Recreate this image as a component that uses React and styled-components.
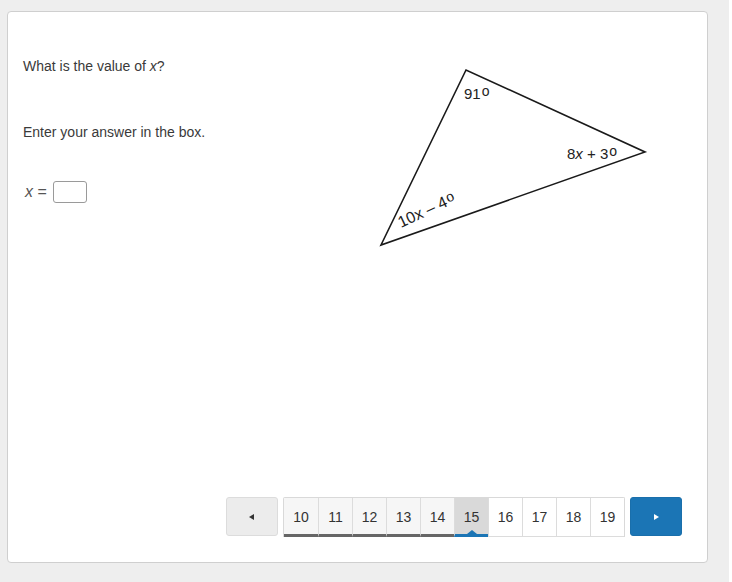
import React from "react";
import styled, { createGlobalStyle } from "styled-components";

const Global = createGlobalStyle`
  html, body { margin: 0; padding: 0; background: #ffffff; }
  body { font-family: "Liberation Sans", Arial, sans-serif; color: #333; }
`;

const Page = styled.div`
  width: 729px;
  height: 582px;
  background: #eeeeee;
  padding: 11px 0 0 7px;
  box-sizing: border-box;
`;

const Card = styled.div`
  width: 701px;
  height: 552px;
  box-sizing: border-box;
  background: #fff;
  border: 1px solid #cfcfcf;
  border-radius: 4px;
  display: flex;
  flex-direction: column;
  padding: 46px 25px 25px 15px;
`;

const Body = styled.div`
  display: flex;
  flex: 1;
`;

const Question = styled.div`
  width: 355px;
  font-size: 14px;
  line-height: 16px;
  color: #3a3a3a;
`;

const Para = styled.p`
  margin: 0 0 ${(p) => p.$gap || 0}px 0;
`;

const Answer = styled.div`
  display: flex;
  align-items: center;
  gap: 6px;
  color: #555;
  font-size: 16px;
  padding-left: 2px;
`;

const Var = styled.i`
  font-style: italic;
`;

const Box = styled.span`
  display: inline-block;
  width: 32px;
  height: 20px;
  border: 1px solid #9a9a9a;
  border-radius: 3px;
  background: #fff;
`;

const Figure = styled.svg`
  display: block;
  margin-top: 8px;
`;

const Pager = styled.div`
  display: flex;
  justify-content: flex-end;
  align-items: flex-start;
`;

const NavButton = styled.button`
  width: 52px;
  height: 39px;
  box-sizing: border-box;
  border-radius: 3px;
  border: 1px solid ${(p) => (p.$primary ? "#1a6fab" : "#dcdcdc")};
  background: ${(p) => (p.$primary ? "#1b75b5" : "#ececec")};
  display: flex;
  align-items: center;
  justify-content: center;
  padding: 0;
  margin: ${(p) => (p.$primary ? "0 0 0 5px" : "0 5px 0 0")};
`;

const Tabs = styled.div`
  display: flex;
  border: 1px solid #d9d9d9;
  border-bottom: none;
  border-radius: 2px 2px 0 0;
`;

const Tab = styled.div`
  position: relative;
  width: 34px;
  height: 39px;
  box-sizing: border-box;
  border-left: ${(p) => (p.$first ? "none" : "1px solid #dcdcdc")};
  border-bottom: ${(p) =>
    p.$status === "current"
      ? "3px solid #1b75b5"
      : p.$status === "visited"
      ? "3px solid #666666"
      : "1px solid #dcdcdc"};
  background: ${(p) =>
    p.$status === "current"
      ? "#d9d9d9"
      : p.$status === "visited"
      ? "#f6f6f6"
      : "#ffffff"};
  display: flex;
  align-items: center;
  justify-content: center;
  font-size: 14px;
  color: #333;
  padding-top: ${(p) => (p.$status === "new" ? "0" : "2px")};
`;

const Pointer = styled.span`
  position: absolute;
  bottom: 0;
  left: 50%;
  margin-left: -5px;
  width: 0;
  height: 0;
  border-left: 5px solid transparent;
  border-right: 5px solid transparent;
  border-bottom: 4px solid #1b75b5;
`;

const pages = [10, 11, 12, 13, 14, 15, 16, 17, 18, 19];

function Deg() {
  return (
    <tspan fontSize="14" dy="-3" dx="1">
      o
    </tspan>
  );
}

export default function App() {
  return (
    <>
      <Global />
      <Page>
        <Card>
          <Body>
            <Question>
              <Para $gap={50}>
                What is the value of <Var>x</Var>?
              </Para>
              <Para $gap={41}>Enter your answer in the box.</Para>
              <Answer>
                <span>
                  <Var>x</Var> =
                </span>
                <Box />
              </Answer>
            </Question>
            <Figure width="272" height="184" viewBox="0 0 272 184">
              <polygon
                points="88,4 3,179 267,86"
                fill="none"
                stroke="#1a1a1a"
                strokeWidth="1.6"
                strokeLinejoin="miter"
              />
              <g
                fontFamily="Liberation Sans, Arial, sans-serif"
                fontSize="15"
                fill="#222"
              >
                <text x="86" y="33">
                  91<Deg />
                </text>
                <text x="189" y="93">
                  8<tspan fontStyle="italic">x</tspan> + 3<Deg />
                </text>
                <text x="23" y="162" fontSize="16" transform="rotate(-25 23 162)">
                  10x – 4<Deg />
                </text>
              </g>
            </Figure>
          </Body>
          <Pager>
            <NavButton aria-label="previous">
              <svg width="8" height="8" viewBox="0 0 8 8">
                <polygon points="6,1 6,7 1,4" fill="#333" />
              </svg>
            </NavButton>
            <Tabs>
              {pages.map((n, i) => {
                const status = n < 15 ? "visited" : n === 15 ? "current" : "new";
                return (
                  <Tab key={n} $first={i === 0} $status={status}>
                    {n}
                    {status === "current" && <Pointer />}
                  </Tab>
                );
              })}
            </Tabs>
            <NavButton $primary aria-label="next">
              <svg width="8" height="8" viewBox="0 0 8 8">
                <polygon points="2,1 2,7 7,4" fill="#fff" />
              </svg>
            </NavButton>
          </Pager>
        </Card>
      </Page>
    </>
  );
}
